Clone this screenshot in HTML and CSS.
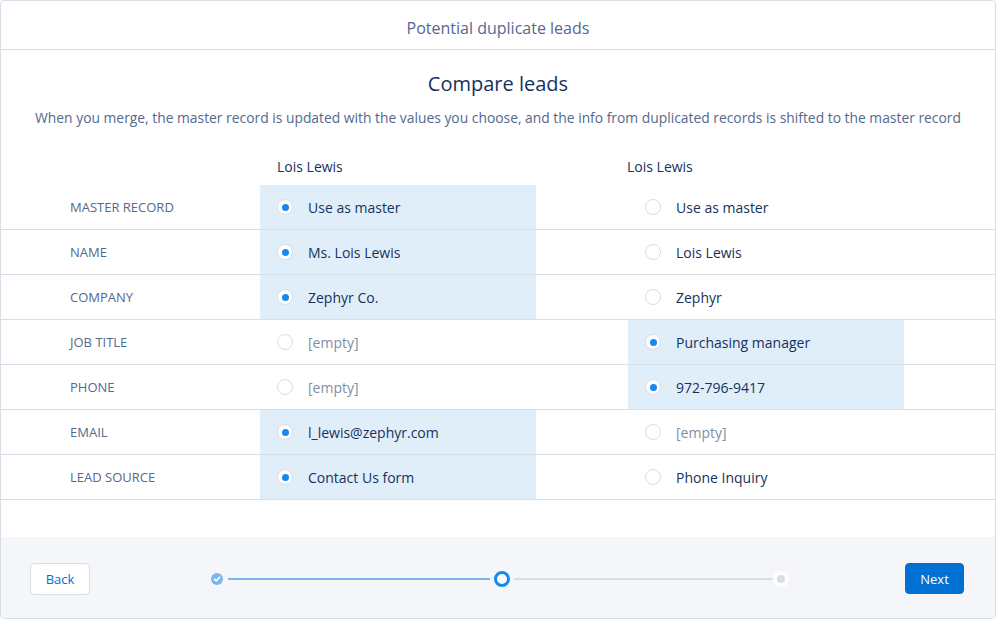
FILE: index.html
```html
<!DOCTYPE html>
<html>
<head>
<meta charset="utf-8">
<link rel="stylesheet" href="styles.css">
</head>
<body>
<div class="card">
  <div class="header">Potential duplicate leads</div>
  <div class="main">
    <h1 class="title">Compare leads</h1>
    <p class="desc">When you merge, the master record is updated with the values you choose, and the info from duplicated records is shifted to the master record</p>
    <div class="table">
      <div class="names">
        <div class="lab"></div>
        <div class="name name1">Lois Lewis</div>
        <div class="gapc"></div>
        <div class="name name2">Lois Lewis</div>
      </div>
      <div class="row">
        <div class="lab">MASTER RECORD</div>
        <div class="cell sel"><span class="radio on"></span><span class="val">Use as master</span></div>
        <div class="gapc"></div>
        <div class="cell"><span class="radio"></span><span class="val">Use as master</span></div>
      </div>
      <div class="row">
        <div class="lab">NAME</div>
        <div class="cell sel"><span class="radio on"></span><span class="val">Ms. Lois Lewis</span></div>
        <div class="gapc"></div>
        <div class="cell"><span class="radio"></span><span class="val">Lois Lewis</span></div>
      </div>
      <div class="row">
        <div class="lab">COMPANY</div>
        <div class="cell sel"><span class="radio on"></span><span class="val">Zephyr Co.</span></div>
        <div class="gapc"></div>
        <div class="cell"><span class="radio"></span><span class="val">Zephyr</span></div>
      </div>
      <div class="row">
        <div class="lab">JOB TITLE</div>
        <div class="cell"><span class="radio"></span><span class="val empty">[empty]</span></div>
        <div class="gapc"></div>
        <div class="cell sel"><span class="radio on"></span><span class="val">Purchasing manager</span></div>
      </div>
      <div class="row">
        <div class="lab">PHONE</div>
        <div class="cell"><span class="radio"></span><span class="val empty">[empty]</span></div>
        <div class="gapc"></div>
        <div class="cell sel"><span class="radio on"></span><span class="val">972-796-9417</span></div>
      </div>
      <div class="row">
        <div class="lab">EMAIL</div>
        <div class="cell sel"><span class="radio on"></span><span class="val">l_lewis@zephyr.com</span></div>
        <div class="gapc"></div>
        <div class="cell"><span class="radio"></span><span class="val empty">[empty]</span></div>
      </div>
      <div class="row">
        <div class="lab">LEAD SOURCE</div>
        <div class="cell sel"><span class="radio on"></span><span class="val">Contact Us form</span></div>
        <div class="gapc"></div>
        <div class="cell"><span class="radio"></span><span class="val">Phone Inquiry</span></div>
      </div>
    </div>
  </div>
  <div class="footer">
    <button class="btn back">Back</button>
    <div class="progress">
      <span class="step done"><svg viewBox="0 0 12 12" width="12" height="12"><circle cx="6" cy="6" r="6" fill="#7db6ef"/><path d="M3.4 6.2 L5.2 7.9 L8.7 4.3" fill="none" stroke="#fff" stroke-width="1.6" stroke-linecap="round" stroke-linejoin="round"/></svg></span>
      <span class="line line-done"></span>
      <span class="step current"></span>
      <span class="line line-todo"></span>
      <span class="step todo"></span>
    </div>
    <button class="btn next">Next</button>
  </div>
</div>
</body>
</html>
```

FILE: styles.css
```css
* { box-sizing: border-box; }
html, body { margin: 0; padding: 0; background: #fff; }
body { font-family: "Open Sans", "Liberation Sans", sans-serif; color: #16325c; }

.card {
  width: 996px;
  height: 619px;
  border: 1px solid #d8dde6;
  border-radius: 4px;
  display: flex;
  flex-direction: column;
  overflow: hidden;
}

.header {
  height: 49px;
  flex: none;
  border-bottom: 1px solid #d8dde6;
  display: flex;
  align-items: center;
  justify-content: center;
  font-size: 16px;
  color: #54698d;
  padding-top: 6px;
}

.main { flex: 1; }

.title {
  margin: 20px 0 0;
  font-size: 20px;
  line-height: 28px;
  font-weight: 400;
  text-align: center;
  color: #16325c;
}

.desc {
  margin: 10px 0 0;
  font-size: 13.85px;
  line-height: 20px;
  text-align: center;
  color: #54698d;
}

.table { margin-top: 29px; }

.names, .row {
  display: grid;
  grid-template-columns: 259px 276px 92px 276px 1fr;
}

.names { height: 28px; }
.name { font-size: 14px; line-height: 20px; font-weight: 500; color: #16325c; }
.name1 { padding-left: 17px; }
.name2 { padding-left: 0; margin-left: -1px; }

.row {
  height: 45px;
  border-bottom: 1px solid #d8dde6;
}

.lab {
  padding-left: 69px;
  display: flex;
  align-items: center;
  font-size: 13px;
  color: #54698d;
}

.cell {
  display: flex;
  align-items: center;
  padding-left: 17px;
}
.cell.sel { background: #e0eefa; }

.radio {
  width: 16px;
  height: 16px;
  border-radius: 50%;
  border: 1px solid #d8dde6;
  background: #fff;
  flex: none;
  position: relative;
}
.radio.on::after {
  content: "";
  position: absolute;
  left: 3.5px;
  top: 3.5px;
  width: 7px;
  height: 7px;
  border-radius: 50%;
  background: #1589ee;
}

.val {
  margin-left: 15px;
  font-size: 14px;
  color: #16325c;
}
.val.empty { color: #7f8ea6; }

.footer {
  flex: none;
  height: 81px;
  background: #f4f6f9;
  display: flex;
  align-items: center;
  padding-left: 29px;
  padding-top: 2px;
}

.btn {
  font-family: "Open Sans", "Liberation Sans", sans-serif;
  font-size: 13px;
  border-radius: 4px;
  cursor: pointer;
}
.back {
  width: 60px;
  height: 32px;
  background: #fff;
  border: 1px solid #d8dde6;
  color: #0070d2;
}
.next {
  width: 59px;
  height: 31px;
  background: #0070d2;
  border: 1px solid #0070d2;
  color: #fff;
  margin-left: 116px;
}

.progress {
  margin-left: 121px;
  width: 578px;
  display: flex;
  align-items: center;
}
.step { flex: none; display: block; }
.step.done { width: 12px; height: 12px; }
.step.done svg { display: block; }
.line { height: 2px; flex: none; }
.line-done { width: 262px; margin: 0 4px 0 5px; background: #7db6ef; }
.line-todo { width: 259px; margin-left: 4px; background: #d8dde6; }
.step.current {
  width: 16px;
  height: 16px;
  border-radius: 50%;
  border: 3px solid #1589ee;
  background: #fff;
}
.step.todo {
  width: 16px;
  height: 16px;
  border-radius: 50%;
  border: 4px solid #fff;
  background: #d8dde6;
}
```
